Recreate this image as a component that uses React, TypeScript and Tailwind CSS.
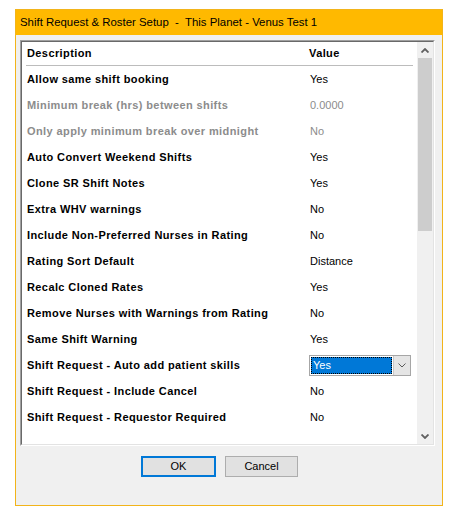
import React from "react";

type Row = {
  label: string;
  value: string;
  disabled?: boolean;
  combo?: boolean;
};

const rows: Row[] = [
  { label: "Allow same shift booking", value: "Yes" },
  { label: "Minimum break (hrs) between shifts", value: "0.0000", disabled: true },
  { label: "Only apply minimum break over midnight", value: "No", disabled: true },
  { label: "Auto Convert Weekend Shifts", value: "Yes" },
  { label: "Clone SR Shift Notes", value: "Yes" },
  { label: "Extra WHV warnings", value: "No" },
  { label: "Include Non-Preferred Nurses in Rating", value: "No" },
  { label: "Rating Sort Default", value: "Distance" },
  { label: "Recalc Cloned Rates", value: "Yes" },
  { label: "Remove Nurses with Warnings from Rating", value: "No" },
  { label: "Same Shift Warning", value: "Yes" },
  { label: "Shift Request - Auto add patient skills", value: "Yes", combo: true },
  { label: "Shift Request - Include Cancel", value: "No" },
  { label: "Shift Request - Requestor Required", value: "No" },
];

// small chevron used by the scrollbar arrows and the combo button
function Chevron({ up, thin }: { up?: boolean; thin?: boolean }) {
  return (
    <svg width="8" height="5" viewBox="0 0 8 5" className="block">
      <polyline
        points={up ? "0.5,4.5 4,1 7.5,4.5" : "0.5,0.5 4,4 7.5,0.5"}
        fill="none"
        stroke={thin ? "#5a5a5a" : "#606060"}
        strokeWidth={thin ? 1 : 1.8}
      />
    </svg>
  );
}

function ValueCell({ row }: { row: Row }) {
  if (row.combo) {
    // the in-place editor that is open on this row
    return (
      <div className="ml-[-1px] flex h-[21px] w-[102px] border border-[#a6a6a6] bg-white">
        <div className="m-[1px] flex flex-1 items-center border border-dotted border-black bg-[#0078d7] pl-[1px] text-white">
          {row.value}
        </div>
        <div className="flex w-[17px] items-center justify-center border-l border-[#c8c8c8] bg-[#e5e5e5]">
          <Chevron thin />
        </div>
      </div>
    );
  }
  return (
    <span className={row.disabled ? "text-[#8c8c8c]" : "text-black"}>{row.value}</span>
  );
}

export default function App() {
  return (
    <div className="h-[517px] w-[455px] bg-white pl-[15px] pt-[9px] font-['Liberation_Sans',Arial,sans-serif]">
      <div className="flex h-[497px] w-[428px] flex-col border border-[#f2b41a] bg-[#f0f0f0]">
        {/* title bar */}
        <div className="flex h-[25px] items-center bg-[#ffb900] pl-[4px] text-[11.4px] whitespace-pre text-black">
          Shift Request &amp; Roster Setup  -  This Planet - Venus Test 1
        </div>

        {/* property list */}
        <div className="ml-[4px] mt-[5px] flex h-[406px] w-[415px] border border-t-[#a0a0a0] border-l-[#a0a0a0] border-r-white border-b-white">
          <div className="flex flex-1 border border-t-[#696969] border-l-[#696969] border-r-[#e3e3e3] border-b-[#e3e3e3] bg-white">
            <div className="flex-1 overflow-hidden text-[11px]">
              <div className="mx-[4px] flex h-[24px] items-center border-b border-[#bcbcbc] font-bold tracking-[0.4px]">
                <span className="w-[283px] pl-[1px]">Description</span>
                <span>Value</span>
              </div>
              {rows.map((r) => (
                <div key={r.label} className="flex h-[26px] items-center px-[5px]">
                  <span
                    className={
                      "w-[283px] font-bold tracking-[0.4px] " +
                      (r.disabled ? "text-[#8c8c8c]" : "text-black")
                    }
                  >
                    {r.label}
                  </span>
                  <ValueCell row={r} />
                </div>
              ))}
            </div>

            {/* vertical scrollbar */}
            <div className="flex w-[16px] flex-col bg-[#f0f0f0]">
              <div className="flex h-[16px] items-center justify-center">
                <Chevron up />
              </div>
              <div className="mx-[1px] h-[173px] bg-[#cdcdcd]" />
              <div className="flex-1" />
              <div className="flex h-[16px] items-center justify-center">
                <Chevron />
              </div>
            </div>
          </div>
        </div>

        {/* buttons */}
        <div className="mt-[10px] flex justify-center gap-[9px] pr-[19px] text-[11px]">
          <button className="h-[21px] w-[75px] border-2 border-[#0078d7] bg-[#e1e1e1] text-black">
            OK
          </button>
          <button className="h-[21px] w-[73px] border border-[#adadad] bg-[#e1e1e1] text-black">
            Cancel
          </button>
        </div>
      </div>
    </div>
  );
}
